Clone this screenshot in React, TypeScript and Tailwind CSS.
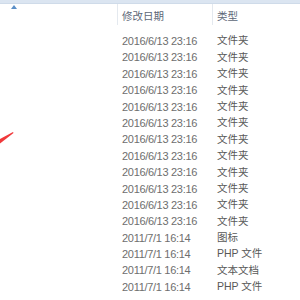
const rows: { date: string; type: string }[] = [
  ...Array.from({ length: 12 }, () => ({ date: '2016/6/13 23:16', type: '文件夹' })),
  { date: '2011/7/1 16:14', type: '图标' },
  { date: '2011/7/1 16:14', type: 'PHP 文件' },
  { date: '2011/7/1 16:14', type: '文本文档' },
  { date: '2011/7/1 16:14', type: 'PHP 文件' },
];

export default function App() {
  return (
    <div
      className="relative w-[300px] h-[300px] overflow-hidden bg-white"
      style={{ fontFamily: '"Liberation Sans", "Noto Sans CJK SC", sans-serif' }}
    >
      {/* top band */}
      <div className="h-[4px] bg-[#dbe5f1] border-b border-[#cfdbe9]" />

      {/* column header */}
      <div className="grid grid-cols-[117px_95px_1fr] h-[21px]">
        <div className="relative">
          <svg className="absolute left-[11px] top-[1px]" width="6" height="4" viewBox="0 0 6 4">
            <path d="M0 4 L3 0 L6 4 Z" fill="#5b8fc7" />
          </svg>
        </div>
        <div className="border-l border-[#e4e9ef] pl-[4px] pt-[5px] text-[10.5px] leading-[14px] text-[#5d6777]">
          修改日期
        </div>
        <div className="border-l border-[#e4e9ef] pl-[4px] pt-[5px] text-[10.5px] leading-[14px] text-[#5d6777]">
          类型
        </div>
      </div>

      {/* rows */}
      <div className="mt-[8px] flex flex-col">
        {rows.map((r, i) => (
          <div key={i} className="grid grid-cols-[117px_95px_1fr] h-[16.4px] items-center">
            <div />
            <div className="pl-[5px] text-[11px] tracking-[-0.3px] text-[#6e6e6e] whitespace-nowrap">{r.date}</div>
            <div className="pl-[5px] text-[10.5px] text-[#585858] whitespace-nowrap">{r.type}</div>
          </div>
        ))}
      </div>

      {/* red arrow stroke */}
      <svg className="absolute left-0 top-[128px]" width="20" height="18" viewBox="0 0 20 18">
        <path d="M0 11 L13 4 L13.5 5 L0 15.5 Z" fill="#f0393b" />
      </svg>
    </div>
  );
}
